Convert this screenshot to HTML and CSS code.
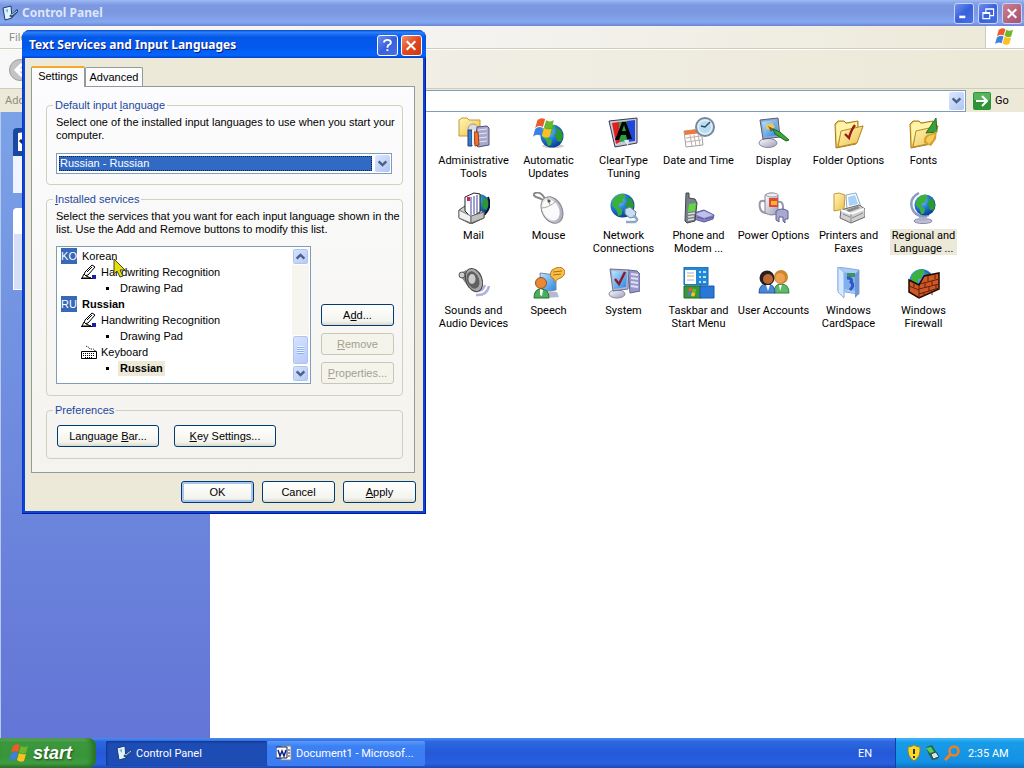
FILE: index.html
```html
<!doctype html>
<html lang="en">
<head>
    <meta charset="UTF-8">
    <title>Control Panel</title>
    <link rel="stylesheet" href="styles.css">
</head>
<body>
<svg class="defs" width="0" height="0">
    <defs>
        <radialGradient id="sea" cx="35%" cy="30%" r="75%">
            <stop offset="0" stop-color="#7cc8f8"/>
            <stop offset=".5" stop-color="#1f78d8"/>
            <stop offset="1" stop-color="#083890"/>
        </radialGradient>
        <linearGradient id="paper" x1="0" y1="0" x2="1" y2="1">
            <stop offset="0" stop-color="#fff8b8"/>
            <stop offset="1" stop-color="#eebe4c"/>
        </linearGradient>
        <linearGradient id="screen" x1="0" y1="0" x2="1" y2="1">
            <stop offset="0" stop-color="#b8e8ff"/>
            <stop offset="1" stop-color="#2880e0"/>
        </linearGradient>
        <linearGradient id="metal" x1="0" y1="0" x2="1" y2="1">
            <stop offset="0" stop-color="#ffffff"/>
            <stop offset="1" stop-color="#9c9cb8"/>
        </linearGradient>
        <symbol id="globe" viewBox="0 0 24 24">
            <circle cx="12" cy="12" r="11.5" fill="url(#sea)"/>
            <path d="M3 6Q8 0 14 1l1 3-3 2 1 3-4 1-1 4 4 2-1 5-3 1-2-6-4-4z" fill="#3cb038"/>
            <path d="M16 4l5 2 2 6-2 6-4-1-1-4-2-2 3-3z" fill="#2c9830"/>
        </symbol>
        <symbol id="flag" viewBox="0 0 20 20">
            <path d="M4 3q3-3 7-1L9 9Q5 7 2 10z" fill="#ee5a2a"/>
            <path d="M12 3q3 2 7 0l-2 7q-4 2-7-1z" fill="#6cb82c"/>
            <path d="M2 11q3-3 7-1l-2 7q-4-2-7 1z" fill="#3c80e4"/>
            <path d="M10 10q3 2 7 1l-2 7q-4 2-7-1z" fill="#fcc020"/>
        </symbol>
        <symbol id="panel" viewBox="0 0 16 16">
            <path d="M1 3l8-2 1 12-7 2z" fill="#e4f2fc" stroke="#183878"/>
            <path d="M3 5l3-1v4z" fill="#78b8e8"/>
            <path d="M8 10l2 1 6-6" fill="none" stroke="#284878" stroke-width="3"/>
            <path d="M8 9l2 1 5-4" fill="none" stroke="#b8d8f4"/>
        </symbol>
        <symbol id="folder" viewBox="0 0 32 32">
            <path d="M2 7l3-3h6l2 2 12-2v7l5-2-7 18-20 4z" fill="#e8c050" stroke="#a87c20"/>
            <path d="M3 8l3-3h5l2 2 11-2v6L8 14 4 28z" fill="#fff4a8"/>
            <path d="M8 14l22-5-6 17-19 4z" fill="url(#paper)" stroke="#b88c28"/>
        </symbol>
        <symbol id="pen" viewBox="0 0 16 16">
            <path d="M4 8l7-7 3 2-7 8-4 1z" fill="#fff" stroke="#000"/>
            <path d="M6 8l5-5M3 10l-2 4h9l-5-2z" fill="#fff" stroke="#000"/>
            <path d="M0 14.5h11" stroke="#000"/>
            <path d="M11 11h4v4h-4z" fill="#1820a0"/>
        </symbol>
        <symbol id="down" viewBox="0 0 10 10">
            <path d="M1.500 3L5 6.500 8.500 3" fill="none" stroke="#4d6185" stroke-width="2.200"/>
        </symbol>
        <symbol id="close" viewBox="0 0 21 21">
            <path d="M5.500 5.500l10 10M15.500 5.500l-10 10" stroke="#fff" stroke-width="2.400"/>
        </symbol>
    </defs>
</svg>

<div class="window">
    <div class="titlebar">
        <svg class="small" viewBox="0 0 16 16"><use href="#panel"/></svg>
        <h1>Control Panel</h1>
        <button class="ctl" aria-label="Minimize"><svg viewBox="0 0 21 21"><path d="M5 13h7v3H5z" fill="#fff"/></svg></button>
        <button class="ctl" aria-label="Restore"><svg viewBox="0 0 21 21"><path d="M8 9V5h9v8h-4M4.500 9.500h8v7h-8zM4 10.500h9M8 5.500h9" fill="none" stroke="#fff" stroke-width="1.300"/></svg></button>
        <button class="ctl red" aria-label="Close"><svg viewBox="0 0 21 21"><use href="#close"/></svg></button>
    </div>
    <div class="menubar">
        <span class="menu">File</span>
        <div class="brand"><svg viewBox="0 0 20 20"><use href="#flag"/></svg></div>
    </div>
    <div class="toolbar">
        <button class="back" aria-label="Back"><svg viewBox="0 0 24 24"><circle cx="12" cy="12" r="10.500" fill="#c4c4c4" stroke="#9c9c9c"/><path d="M14 6l-6 6 6 6M8 12h10" fill="none" stroke="#fff" stroke-width="3"/></svg></button>
    </div>
    <div class="address">
        <label for="addr">Address</label>
        <div class="addrbox">
            <input type="text" id="addr">
            <button class="arrow" aria-label="Show list"><svg viewBox="0 0 10 10"><use href="#down"/></svg></button>
        </div>
        <button class="go"><svg viewBox="0 0 18 18"><rect width="18" height="18" rx="2" fill="#2c9434"/><path d="M1 1h16v7H1z" fill="#58b45c"/><path d="M3 9h11M9 4l5 5-5 5" fill="none" stroke="#fff" stroke-width="2"/></svg>Go</button>
    </div>
    <div class="content">
        <div class="sidebar">
            <div class="box">
                <div class="head"><svg viewBox="0 0 20 24"><path d="M2 4l14-2v20H2z" fill="#fff"/><path d="M4 11l4 4 6-8" fill="none" stroke="#102c60" stroke-width="3"/></svg></div>
                <div class="white"></div>
            </div>
            <div class="box also">
                <div class="top"></div>
                <div class="pale"></div>
            </div>
        </div>
        <ul class="icons">
            <li>
                <svg viewBox="0 0 32 32"><path d="M1 3l3-2h5l2 2h11v16H1z" fill="url(#paper)" stroke="#c89830"/><circle cx="15" cy="12" r="5" fill="#ddd" stroke="#999"/><path d="M19 10l10-1 2 2v17l-11 2-3-3z" fill="#a8a8cc" stroke="#505078"/><path d="M20 13l9-1M20 17l9-1M20 21l9-1M20 25l9-1" stroke="#e4e4f4"/><path d="M16 15h4l1 13-4 1z" fill="#f07030" stroke="#98401c"/><path d="M10 13h4v16h-4z" fill="#3878c8" stroke="#184078"/><path d="M14 13h2v15h-2z" fill="#eee"/></svg>
                <span>Administrative Tools</span>
            </li>
            <li>
                <svg viewBox="0 0 32 32"><ellipse cx="20" cy="29" rx="11" ry="2" fill="#ccc"/><use href="#globe" x="7" y="7" width="24" height="24"/><use href="#flag" x="0" y="0" width="22" height="22"/></svg>
                <span>Automatic Updates</span>
            </li>
            <li>
                <svg viewBox="0 0 32 32"><path d="M1 4l28-3v25L7 30z" fill="#c8c8d8" stroke="#383850"/><path d="M4 6l7-1 1 20-4 2z" fill="#e02020"/><path d="M11 5l8-1v20l-7 1z" fill="#28a040"/><path d="M19 4l8-1v21l-8 1z" fill="#2048d8"/><path d="M7 23L14 5h4l6 17h-5l-1-4h-5l-2 5zM14 14h4l-2-6z" fill="#000" fill-rule="evenodd"/><path d="M16 23h5l-1 6z" fill="#d8f0f0"/></svg>
                <span>ClearType Tuning</span>
            </li>
            <li>
                <svg viewBox="0 0 32 32"><path d="M1 14l17-2 2 16-17 2z" fill="#fff" stroke="#a0a0a0"/><path d="M1 14l17-2 1 4-17 2z" fill="#f07838"/><path d="M3 21l15-2M3 25l15-2M7 18l2 11M11 18l2 11M15 17l2 11" stroke="#c0b0a8"/><circle cx="22" cy="10" r="9" fill="#dceef8" stroke="#78889c" stroke-width="2"/><circle cx="22" cy="10" r="6" fill="#b8dcf0"/><path d="M27 5l-5 5-4-1" fill="none" stroke="#384860" stroke-width="1.500"/></svg>
                <span>Date and Time</span>
            </li>
            <li>
                <svg viewBox="0 0 32 32"><ellipse cx="10" cy="26" rx="9" ry="4.500" fill="url(#metal)" stroke="#8888a0"/><path d="M2 3l18-2 2 19-17 2z" fill="#98a8c8" stroke="#506080"/><path d="M4 5l14-2 2 15-13 2z" fill="url(#screen)"/><path d="M8 8l6-2 3 4-4 3-5-1z" fill="#f0c850"/><path d="M10 9l6 3-3 3z" fill="#806020"/><path d="M15 12l7 3 9 8-3 1-11-7z" fill="#38a838" stroke="#186820"/></svg>
                <span>Display</span>
            </li>
            <li>
                <svg viewBox="0 0 32 32"><use href="#folder"/><path d="M12 17l4 4q2-8 6-13" fill="none" stroke="#981c18" stroke-width="2.400"/></svg>
                <span>Folder Options</span>
            </li>
            <li>
                <svg viewBox="0 0 32 32"><use href="#folder"/><path d="M18 16L28 1l1 14z" fill="#38a038" stroke="#207028"/><path d="M16 26q-1-8 6-9 7-2 7-5l-1 10-5 7z" fill="#d4a030"/><path d="M18 24q0-5 6-6l3-1-2 6-4 4z" fill="#f4cc58"/></svg>
                <span>Fonts</span>
            </li>
            <li>
                <svg viewBox="0 0 32 32"><use href="#globe" x="10" y="0" width="22" height="25"/><path d="M30 5q4 10-3 17l-5 3" fill="none" stroke="#081040" stroke-width="2"/><path d="M1 18l9-6 16 8v6l-13 6-12-6z" fill="#d0d0d0" stroke="#444"/><path d="M7 5l9-4 6 1v18l-9 5-6-6z" fill="#fff" stroke="#222"/><path d="M16 4v18M19 3v18M13 5v18" stroke="#4040a0"/><path d="M9 5h3v4H9z" fill="#d02060"/><path d="M1 18l12 6v7L1 26z" fill="#f0f0f0" stroke="#777"/><path d="M13 24l13-4v6l-13 5z" fill="#c0c0c0" stroke="#666"/></svg>
                <span>Mail</span>
            </li>
            <li>
                <svg viewBox="0 0 32 32"><path d="M12 7Q8-1 2 1q-3 2 1 4 4 1 7 3" fill="none" stroke="#888" stroke-width="2"/><ellipse cx="19" cy="18" rx="10" ry="14" transform="rotate(-28 19 18)" fill="url(#metal)" stroke="#888"/><ellipse cx="18" cy="18" rx="8" ry="11" transform="rotate(-28 18 18)" fill="#fafafa"/><path d="M8 16q8 0 15-7M14 5l3 8" fill="none" stroke="#a8a8a8"/><circle cx="16" cy="9" r="1.600" fill="#555"/></svg>
                <span>Mouse</span>
            </li>
            <li>
                <svg viewBox="0 0 32 32"><use href="#globe" x="2" y="1" width="25" height="25"/><path d="M17 17l5-2 6 5-1 5-5 1-5-4z" fill="#c8ddf0" stroke="#6080a0"/><path d="M25 24q7 3 2 6-5 0-9 0" fill="none" stroke="#90a8c8" stroke-width="2.500"/></svg>
                <span>Network Connections</span>
            </li>
            <li>
                <svg viewBox="0 0 32 32"><path d="M11 21l10-3 10 5-1 4-9 3-10-3z" fill="#8484c4" stroke="#5858a0"/><path d="M12 22l9-3 9 4-9 3z" fill="#c0c0e8"/><path d="M14 25l7 2M22 27l8-2" stroke="#5858a0"/><path d="M3 1h3v5l6 1 2 4-2 18-8 2-2-2z" fill="#788088" stroke="#40484c"/><path d="M6 12l7-1-1 8-7 1z" fill="#60d840"/><path d="M5 22l7-1M5 25l6-1M5 28l6-1" stroke="#ddd" stroke-width="1.500"/></svg>
                <span>Phone and Modem ...</span>
            </li>
            <li>
                <svg viewBox="0 0 32 32"><path d="M8 10Q0 6 2 16q1 5 7 5M20 10q5-1 5 5v5" fill="none" stroke="#9898a8" stroke-width="2"/><path d="M7 3q6-4 13 0v18q-6 4-13 0z" fill="url(#metal)" stroke="#8080a0"/><path d="M11 6h9v9h-9z" fill="#e04838"/><path d="M13 9h6v4h-6z" fill="#f4b828"/><ellipse cx="14" cy="3" rx="6" ry="2" fill="#eee" stroke="#a0a0b0"/><path d="M18 19q6-4 12 0v8h-3v4l-2-2v-4h-4v5l-3-2z" fill="#a8a8d0" stroke="#606090"/></svg>
                <span>Power Options</span>
            </li>
            <li>
                <svg viewBox="0 0 32 32"><path d="M1 2l5-1 6 2-1 14-10 2z" fill="url(#paper)" stroke="#c89830"/><path d="M13 3l10-2 5 14-14 3z" fill="#fff" stroke="#88a8d0"/><path d="M15 5l7-2 3 9-9 2z" fill="#a8d0f8"/><path d="M8 18l18-5 6 4v8l-14 6-11-5z" fill="#d0d0d0" stroke="#686868"/><path d="M8 18l10 4 13-5" fill="none" stroke="#fff" stroke-width="2"/><path d="M18 22v8M10 22l7 3M19 26l11-5" stroke="#888"/><path d="M13 18l12-4 2 2-11 4z" fill="#888"/></svg>
                <span>Printers and Faxes</span>
            </li>
            <li class="sel">
                <svg viewBox="0 0 32 32"><ellipse cx="15" cy="29" rx="9" ry="2.500" fill="#c0c0d8" stroke="#8888a0"/><path d="M11 24h8v5h-8z" fill="#b0b0d0"/><path d="M11 1Q1 6 4 16q4 11 17 7" fill="none" stroke="#8c9cc0" stroke-width="2.500"/><use href="#globe" x="6" y="2" width="22" height="22"/></svg>
                <span>Regional and Language ...</span>
            </li>
            <li>
                <svg viewBox="0 0 32 32"><path d="M17 24q8 1 10-6M18 28q11 1 13-9" fill="none" stroke="#b0b0dc" stroke-width="2.500"/><path d="M1 7l7-4 9 16-6 2z" fill="#888"/><ellipse cx="16" cy="13" rx="8" ry="12" transform="rotate(-22 16 13)" fill="#a8a8a8" stroke="#444"/><ellipse cx="15" cy="13" rx="6" ry="9" transform="rotate(-22 15 13)" fill="#606060"/><ellipse cx="14" cy="12" rx="3.500" ry="5" fill="#ccc"/><circle cx="4" cy="8" r="3" fill="#ccc" stroke="#555"/></svg>
                <span>Sounds and Audio Devices</span>
            </li>
            <li>
                <svg viewBox="0 0 32 32"><path d="M7 6l16 2v15l-15 2z" fill="url(#screen)" stroke="#7888a8"/><path d="M16 24l8 1 2 5-12 1z" fill="#b8b8d0"/><path d="M19 3q9-6 13 1 0 6-7 8l-4 3v-3q-6-3-2-9z" fill="#f8c048" stroke="#b87820"/><path d="M20 5l9-1M20 8l8-1" stroke="#a87018"/><circle cx="8" cy="16" r="5.500" fill="#e88838" stroke="#985020"/><path d="M1 31q0-9 7-9 8 0 8 9z" fill="#48b058" stroke="#287030"/><path d="M7 22l3 1-1 6-2-1z" fill="#fff"/></svg>
                <span>Speech</span>
            </li>
            <li>
                <svg viewBox="0 0 32 32"><path d="M20 3l9 1 3 3v17l-10 2z" fill="#9898cc" stroke="#606090"/><path d="M23 7l7 1M23 11l7 1M23 15l7 1M23 19l7 1" stroke="#e0e0f4" stroke-width="2"/><ellipse cx="9" cy="27" rx="8" ry="4" fill="url(#metal)" stroke="#8888a0"/><path d="M2 2l19 1-1 19-15 2z" fill="#b0b8d0" stroke="#687098"/><path d="M4 4l15 1-1 15-12 2z" fill="url(#screen)"/><path d="M7 12l4 5 6-12" fill="none" stroke="#901828" stroke-width="2.400"/></svg>
                <span>System</span>
            </li>
            <li>
                <svg viewBox="0 0 32 32"><path d="M1 0h24v18H1z" fill="#2488d8" stroke="#1868b0"/><path d="M2 3h11v14H2z" fill="#fff"/><path d="M4 6h7M4 13h7" stroke="#90b8d8"/><path d="M4 9h7" stroke="#f0a040"/><path d="M16 5h2M20 5h3M16 10h2M20 10h3M16 15h2M20 15h3" stroke="#b8e0ff" stroke-width="2"/><path d="M1 19h17v12H1z" fill="#389838" stroke="#206828"/><path d="M17 19h14v12H17z" fill="#2878d8" stroke="#1858a8"/><use href="#flag" x="4" y="20" width="10" height="10"/></svg>
                <span>Taskbar and Start Menu</span>
            </li>
            <li>
                <svg viewBox="0 0 32 32"><path d="M16 26q0-9 7-9 8 0 8 9z" fill="#60b868" stroke="#308040"/><circle cx="23" cy="10" r="7" fill="#c88830"/><circle cx="22" cy="11" r="5" fill="#f0a050"/><path d="M1 26q0-9 8-9t8 9z" fill="#4888d8" stroke="#2858a0"/><circle cx="9" cy="11" r="7.500" fill="#282020"/><circle cx="10" cy="12" r="5" fill="#b86830"/><path d="M8 18h4l-2 6zM21 18h3l-2 6z" fill="#fff"/></svg>
                <span>User Accounts</span>
            </li>
            <li>
                <svg viewBox="0 0 32 32"><path d="M5 0l21 3v24l-21-3z" fill="#a8ccf8" stroke="#88a8d8"/><path d="M9 5l14 2v17L9 22z" fill="#80b0f0"/><path d="M14 6h8v4h-8z" fill="#409060"/><path d="M14 11q6 0 4 4 4 3-1 8" fill="none" stroke="#3058c0" stroke-width="3"/><path d="M5 0l6 5v26l-6-6z" fill="#d4e8ff" stroke="#90b0e0"/><path d="M22 7l4-4v24l-4 4z" fill="#7098d8"/></svg>
                <span>Windows CardSpace</span>
            </li>
            <li>
                <svg viewBox="0 0 32 32"><use href="#globe" x="1" y="1" width="25" height="26"/><path d="M1 13l10 5h0l5-9 15-3v16l-20 9-10-6z" fill="#d05828" stroke="#200800" stroke-width="1.500"/><path d="M11 18v13M12 17l19-5M11 22l20-5M11 27l20-6M1 19l10 4M17 16v4M24 14v4M21 20v4M28 18v4M16 25v4M24 24v4M6 16v4M20 9v5M27 8v4" stroke="#602008"/></svg>
                <span>Windows Firewall</span>
            </li>
        </ul>
    </div>
</div>

<div class="taskbar">
    <button class="start"><svg viewBox="0 0 20 20"><use href="#flag"/></svg>start</button>
    <button class="task on"><svg viewBox="0 0 16 16"><use href="#panel"/></svg>Control Panel</button>
    <button class="task"><svg viewBox="0 0 16 16"><path d="M5 1h10v14H5z" fill="#fff" stroke="#888"/><path d="M0 2h11v11H0z" fill="#fff" stroke="#102060"/><path d="M2 5l2 6 2-5 2 5 2-6" fill="none" stroke="#102080" stroke-width="1.500"/><path d="M12 5h2M12 8h2M12 11h2" stroke="#333"/></svg>Document1 - Microsof...</button>
    <span class="lang">EN</span>
    <div class="tray">
        <svg viewBox="0 0 16 16"><path d="M8 0q3 2 6 2 1 10-6 14Q1 12 2 2q3 0 6-2z" fill="#fcd828" stroke="#8c7c38"/><path d="M8 4v5M8 11v2" stroke="#332" stroke-width="2"/></svg>
        <svg viewBox="0 0 16 16"><path d="M1 2l6-2 3 5 3 4v5l-6 1-4-7z" fill="#286850"/><path d="M1 3l5-1 3 5-4 1z" fill="#58d058"/><path d="M6 9l5-2 3 5-6 2z" fill="#d8e8e8" stroke="#284858"/></svg>
        <svg viewBox="0 0 16 16"><circle cx="10" cy="6" r="4.500" fill="none" stroke="#f08020" stroke-width="2.500"/><path d="M7 9l-6 6" stroke="#f08020" stroke-width="3"/></svg>
        <time>2:35 AM</time>
    </div>
</div>

<div class="dialog" role="dialog" aria-labelledby="dlgTitle">
    <div class="dlgbar">
        <h2 id="dlgTitle">Text Services and Input Languages</h2>
        <button class="ctl" aria-label="Help"><svg viewBox="0 0 21 21"><path d="M7 7q0-3 4-3t4 3q0 2-3 3-1 1-1 3M11 15v2" fill="none" stroke="#fff" stroke-width="2.200"/></svg></button>
        <button class="ctl red" aria-label="Close"><svg viewBox="0 0 21 21"><use href="#close"/></svg></button>
    </div>
    <div class="dlgbody">
        <div class="tabs">
            <button class="tab cur">Settings</button>
            <button class="tab">Advanced</button>
        </div>
        <div class="pane">
            <fieldset>
                <legend><label for="deflang">Default input <u>l</u>anguage</label></legend>
                <p>Select one of the installed input languages to use when you start your computer.</p>
                <div class="combo">
                    <select id="deflang"><option>Russian - Russian</option></select>
                    <span class="arrow"><svg viewBox="0 0 10 10"><use href="#down"/></svg></span>
                </div>
            </fieldset>
            <fieldset>
                <legend><u>I</u>nstalled services</legend>
                <p>Select the services that you want for each input language shown in the list. Use the Add and Remove buttons to modify this list.</p>
                <div class="services">
                    <div class="listbox">
                        <ul class="tree">
                            <li><b class="code">KO</b>Korean</li>
                            <li class="l2"><svg viewBox="0 0 16 16"><use href="#pen"/></svg>Handwriting Recognition</li>
                            <li class="l3">Drawing Pad</li>
                            <li class="bold"><b class="code">RU</b>Russian</li>
                            <li class="l2"><svg viewBox="0 0 16 16"><use href="#pen"/></svg>Handwriting Recognition</li>
                            <li class="l3">Drawing Pad</li>
                            <li class="l2"><svg viewBox="0 0 16 16"><path d="M.500 7.500h15v7H.500z" fill="#fff" stroke="#000"/><path d="M2 9.500h12M2 11.500h12M4 13.500h8" stroke="#000" stroke-dasharray="1 1"/><path d="M14 7q0-2-3-2t-3-1-4-2" fill="none" stroke="#000" stroke-dasharray="1 1"/></svg>Keyboard</li>
                            <li class="l3 bold"><span>Russian</span></li>
                        </ul>
                        <div class="scroll">
                            <button class="sbtn" aria-label="Scroll up"><svg class="up" viewBox="0 0 10 10"><use href="#down"/></svg></button>
                            <div class="thumb"><i></i></div>
                            <button class="sbtn" aria-label="Scroll down"><svg viewBox="0 0 10 10"><use href="#down"/></svg></button>
                        </div>
                    </div>
                    <div class="side">
                        <button class="btn">A<u>d</u>d...</button>
                        <button class="btn" disabled><u>R</u>emove</button>
                        <button class="btn" disabled><u>P</u>roperties...</button>
                    </div>
                </div>
            </fieldset>
            <fieldset>
                <legend>Preferences</legend>
                <div class="prefs">
                    <button class="btn wide">Language <u>B</u>ar...</button>
                    <button class="btn wide"><u>K</u>ey Settings...</button>
                </div>
            </fieldset>
        </div>
        <div class="foot">
            <button class="btn ok">OK</button>
            <button class="btn">Cancel</button>
            <button class="btn"><u>A</u>pply</button>
        </div>
    </div>
</div>

<svg class="cursor" viewBox="0 0 12 20"><path d="M1 1v15l3-3 3 6 3-1-3-6h5z" fill="#e4e010" stroke="#484810"/></svg>
</body>
</html>
```
FILE: styles.css
```css
*{
    box-sizing: border-box;
    margin: 0;
    padding: 0;
}
html,body{
    height: 100%;
}
body{
    display: flex;
    flex-direction: column;
    overflow: hidden;
    font-family: Roboto, Tahoma, sans-serif;
    font-size: 11px;
    line-height: 13px;
    color: #000;
}
button,input,select{
    font: inherit;
    color: inherit;
    border: none;
    background: none;
}
ul{
    list-style: none;
}
svg{
    display: block;
    flex: none;
}
.defs,.cursor{
    position: absolute;
}

/* main window */
.window{
    flex: 1;
    min-height: 0;
    display: flex;
    flex-direction: column;
    background: #fff;
}
.titlebar{
    height: 26px;
    flex: none;
    display: flex;
    align-items: center;
    gap: 4px;
    padding: 0 2px;
    background: linear-gradient(#9cb8f4 0, #7c98e0 20%, #7c98e0 50%, #84a8f0 85%, #6c84d4 100%);
}
.titlebar h1{
    flex: 1;
    font: bold 12px/18px "Noto Sans", Tahoma, sans-serif;
    color: #dce6fc;
}
.small{
    width: 16px;
    height: 16px;
}
.ctl{
    width: 20px;
    height: 21px;
    border: 1px solid #c8d4f8;
    border-radius: 3px;
    background: linear-gradient(135deg, #7090ec, #3860dc 50%, #4870e4);
}
.ctl svg{
    width: 18px;
    height: 19px;
}
.titlebar .red{
    background: linear-gradient(135deg, #c88090, #a85070);
}
.menubar{
    height: 23px;
    flex: none;
    display: flex;
    justify-content: space-between;
    border-bottom: 1px solid #d0ccbc;
    background: linear-gradient(90deg, #f8f8f8, #f4f2ee 50%, #ece9d8);
}
.menu{
    padding: 5px 9px;
    color: #8c8c8c;
}
.brand{
    width: 39px;
    padding: 1px 9px;
    border-left: 1px solid #d0ccbc;
    background: #fff;
}
.brand svg{
    width: 19px;
    height: 19px;
}
.toolbar{
    height: 40px;
    flex: none;
    padding: 8px;
    border-top: 1px solid #fff;
    border-bottom: 1px solid #d0ccbc;
    background: linear-gradient(90deg, #f8f8f8, #f0eee4 45%, #ece9d8);
}
.back svg{
    width: 24px;
    height: 24px;
}
.address{
    height: 23px;
    flex: none;
    display: flex;
    align-items: center;
    background: #ece9d8;
}
.address label{
    width: 50px;
    padding-left: 5px;
    color: #8c8c80;
}
.addrbox{
    flex: 1;
    height: 22px;
    display: flex;
    padding: 1px;
    border: 1px solid #7f9db9;
    background: #fff;
}
.addrbox input{
    flex: 1;
}
.arrow{
    width: 15px;
    display: flex;
    align-items: center;
    justify-content: center;
    border-radius: 2px;
    background: linear-gradient(135deg, #dce8ff, #b0c4f4);
}
.arrow svg,.sbtn svg{
    width: 11px;
    height: 11px;
}
.go{
    width: 58px;
    padding-left: 7px;
    display: flex;
    align-items: center;
    gap: 4px;
}
.go svg{
    width: 18px;
    height: 18px;
}
.content{
    flex: 1;
    min-height: 0;
    display: flex;
}
.sidebar{
    width: 210px;
    flex: none;
    padding: 16px 12px;
    border-left: 1px solid #b4c8f0;
    background: linear-gradient(#7ba2e7, #6375d6);
}
.head{
    height: 28px;
    border-radius: 4px 4px 0 0;
    background: #1848a0;
}
.head svg{
    width: 20px;
    height: 26px;
    margin-left: 3px;
}
.white{
    height: 37px;
    background: #f0f4ff;
}
.also{
    margin-top: 15px;
    border-radius: 4px 4px 0 0;
    background: #fff;
}
.top{
    height: 25px;
}
.pale{
    height: 57px;
    border: 1px solid #fff;
    background: #d6dff7;
}
.icons{
    flex: 1;
    display: grid;
    grid-template-columns: repeat(auto-fill, 75px);
    grid-auto-rows: 75px;
    align-content: start;
    padding: 5px 0 0 226px;
}
.icons li{
    display: flex;
    flex-direction: column;
    align-items: center;
    gap: 5px;
    text-align: center;
}
.icons svg{
    width: 32px;
    height: 32px;
}
.icons .sel span{
    margin: 0 4px;
    background: #ece9d8;
}

/* taskbar */
.taskbar{
    height: 30px;
    flex: none;
    display: flex;
    align-items: center;
    color: #fff;
    background: linear-gradient(#4c8cf4 0, #2c68e0 12%, #2458d8 50%, #2860e0 85%, #1c48b4 100%);
}
.start{
    width: 96px;
    height: 30px;
    margin-right: 10px;
    display: flex;
    align-items: center;
    gap: 4px;
    padding-left: 9px;
    border-radius: 0 8px 8px 0;
    font: italic bold 18px/24px "Liberation Sans", Arial, sans-serif;
    text-shadow: 1px 1px 2px #1c4c1c;
    background: linear-gradient(#70b870 0, #3c983c 15%, #389438 60%, #409c40 85%, #2c742c 100%);
    box-shadow: inset -4px 0 5px #287028;
}
.start svg{
    width: 20px;
    height: 20px;
}
.task{
    width: 158px;
    height: 25px;
    display: flex;
    align-items: center;
    gap: 4px;
    padding-left: 9px;
    border-radius: 2px;
    white-space: nowrap;
    background: linear-gradient(#5c9cfc, #3c80f4 20%, #3c7cf0);
}
.task.on{
    width: 161px;
    padding-left: 10px;
    background: #1c4cb4;
    box-shadow: inset 1px 1px 2px #103484;
}
.task svg{
    width: 16px;
    height: 16px;
}
.lang{
    margin-left: auto;
    margin-right: 23px;
}
.tray{
    width: 129px;
    height: 30px;
    display: flex;
    align-items: center;
    gap: 3px;
    padding-left: 10px;
    border-left: 1px solid #1040a0;
    background: linear-gradient(#40b8f8 0, #189ce8 15%, #1490e4 80%, #1070c0 100%);
}
.tray svg{
    width: 16px;
    height: 16px;
}
.tray time{
    margin-left: 5px;
}

/* dialog window */
.dialog{
    position: absolute;
    left: 22px;
    top: 30px;
    width: 404px;
    border-radius: 8px 8px 0 0;
    padding: 0 3px 3px;
    background: #0a44dc;
    box-shadow: inset -1px -1px #001c98, inset 1px 0 #0838c8;
    font-family: "Liberation Sans", Arial, sans-serif;
}
.dlgbar{
    height: 28px;
    display: flex;
    align-items: center;
    gap: 3px;
    margin: 0 -3px;
    padding: 2px 4px 0 7px;
    border-radius: 8px 8px 0 0;
    background: linear-gradient(#0848c8 0, #2c80fc 8%, #0458e8 25%, #0458ec 60%, #0464fc 90%, #0440cc 100%);
}
.dlgbar h2{
    flex: 1;
    font: bold 12px/18px "Noto Sans", Tahoma, sans-serif;
    color: #fff;
    text-shadow: 1px 1px #0c1c78;
}
.dlgbar .ctl{
    width: 21px;
    border-color: #fff;
}
.dlgbar .red{
    background: linear-gradient(135deg, #f09070, #e04820 50%, #c83c14);
}
.dlgbody{
    padding: 7px 6px 8px;
    background: #ece9d8;
}
.tabs{
    display: flex;
    align-items: flex-end;
    height: 21px;
}
.tab{
    width: 58px;
    height: 19px;
    border: 1px solid #919b9c;
    border-bottom: none;
    border-radius: 2px 2px 0 0;
    background: #fcfcfc;
}
.tab.cur{
    width: 54px;
    height: 21px;
    padding-bottom: 3px;
    margin-bottom: -1px;
    border-top: 2px solid #f4a830;
    z-index: 1;
}
.pane{
    display: flex;
    flex-direction: column;
    gap: 8px;
    width: 384px;
    padding: 12px 11px 13px 14px;
    border: 1px solid #919b9c;
    background: linear-gradient(#fcfcfe, #f4f3ee);
}
fieldset{
    min-width: 0;
    padding: 4px 8px 10px 9px;
    border: 1px solid #d0d0bf;
    border-radius: 4px;
}
fieldset p{
    margin-right: -8px;
}
legend{
    margin-left: -3px;
    padding: 0 2px;
    color: #1c489c;
}
.combo{
    display: flex;
    height: 21px;
    margin-top: 11px;
    margin-right: 2px;
    padding: 1px;
    border: 1px solid #7f9db9;
    background: #fff;
}
.combo select{
    flex: 1;
    margin: 1px;
    margin-right: 3px;
    appearance: none;
    color: #fff;
    background: #316ac5;
    outline: 1px dotted #102040;
    outline-offset: -1px;
    padding-left: 1px;
}
.services{
    display: flex;
    gap: 10px;
    margin-top: 10px;
    margin-bottom: 1px;
}
.listbox{
    display: flex;
    flex: none;
    width: 255px;
    height: 138px;
    padding: 1px;
    border: 1px solid #7f9db9;
    background: #fff;
}
.tree{
    flex: 1;
    padding-left: 3px;
}
.tree li{
    display: flex;
    align-items: center;
    gap: 5px;
    height: 16px;
}
.tree svg{
    width: 16px;
    height: 16px;
}
.tree .l2{
    padding-left: 20px;
    gap: 4px;
}
.tree .l3{
    padding-left: 45px;
    gap: 11px;
}
.l3::before{
    content: "";
    width: 3px;
    height: 3px;
    background: #000;
}
.bold{
    font-weight: bold;
}
.l3 span{
    padding: 1px 2px;
    margin: 0 -2px;
    background: #ece9d8;
}
.code{
    width: 16px;
    line-height: 16px;
    font-weight: normal;
    text-align: center;
    color: #fff;
    background: #3868b8;
}
.scroll{
    width: 17px;
    display: flex;
    flex-direction: column;
    background: #f6f5f0;
}
.sbtn,.thumb{
    display: flex;
    align-items: center;
    justify-content: center;
    height: 17px;
    border: 1px solid #fff;
    border-radius: 3px;
    background: linear-gradient(135deg, #d8e4ff, #b4c8f8);
    box-shadow: inset 0 0 0 1px #b0c4ec;
}
.up{
    transform: rotate(180deg);
}
.thumb{
    height: 30px;
    margin-top: auto;
}
.thumb i{
    width: 7px;
    height: 8px;
    background: repeating-linear-gradient(#eef4fe 0 1px, #8cb0f8 1px 2px);
}
.side{
    flex: 1;
    display: flex;
    flex-direction: column;
    justify-content: flex-end;
    gap: 7px;
}
.btn{
    width: 73px;
    height: 22px;
    border: 1px solid #003c74;
    border-radius: 3px;
    background: linear-gradient(#fff, #f4f4ee 80%, #dcd8cc);
}
.btn:disabled{
    color: #a1a192;
    border-color: #c9c7ba;
    background: #f5f4ea;
}
.btn.ok{
    box-shadow: inset 0 0 0 2px #a8c4f0;
}
.btn.wide{
    width: 102px;
}
.prefs{
    display: flex;
    gap: 15px;
    padding: 4px 0 1px 1px;
}
.foot{
    display: flex;
    justify-content: flex-end;
    gap: 8px;
    margin-top: 8px;
    padding-right: 1px;
}
.cursor{
    left: 113px;
    top: 258px;
    width: 12px;
    height: 20px;
}
```
